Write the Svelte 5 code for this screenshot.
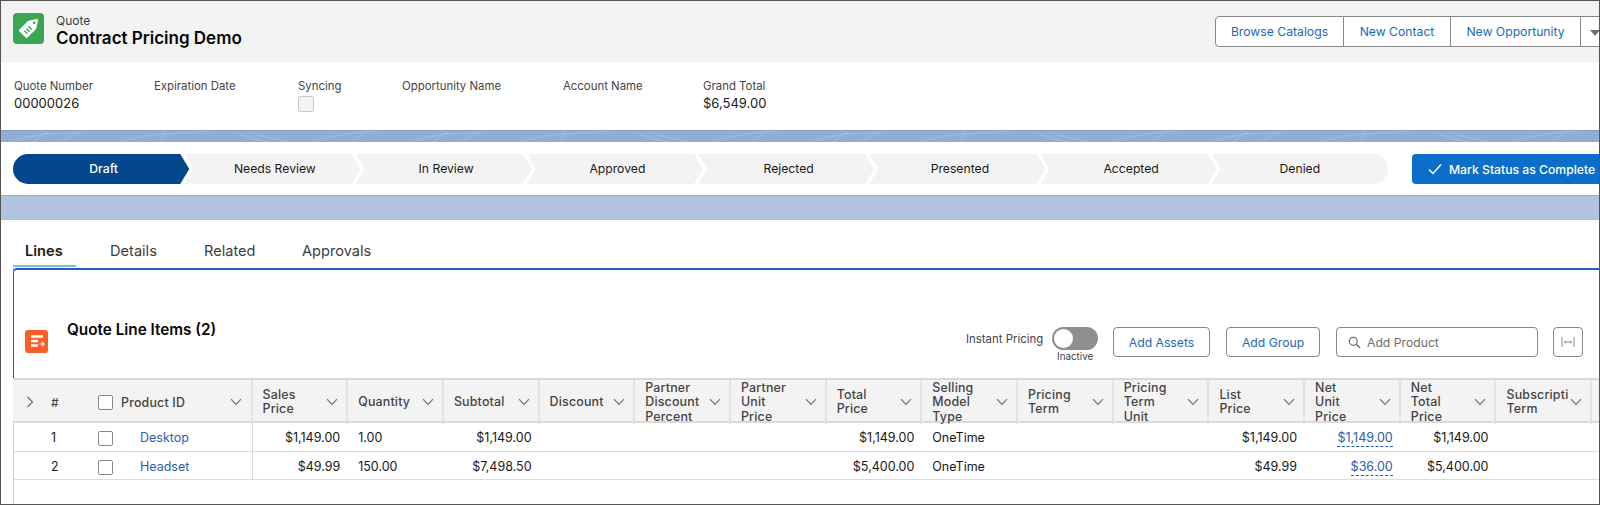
<script>
  const fields = [
    { label: 'Quote Number', value: '00000026', width: 140 },
    { label: 'Expiration Date', width: 144 },
    { label: 'Syncing', check: true, width: 104 },
    { label: 'Opportunity Name', width: 161 },
    { label: 'Account Name', width: 140 },
    { label: 'Grand Total', value: '$6,549.00', width: 100 }
  ];
  const stages = ['Draft', 'Needs Review', 'In Review', 'Approved', 'Rejected', 'Presented', 'Accepted', 'Denied'];
  const tabs = ['Lines', 'Details', 'Related', 'Approvals'];
  const columns = [
    ['Sales', 'Price'],
    ['Quantity'],
    ['Subtotal'],
    ['Discount'],
    ['Partner', 'Discount', 'Percent'],
    ['Partner', 'Unit', 'Price'],
    ['Total', 'Price'],
    ['Selling', 'Model', 'Type'],
    ['Pricing', 'Term'],
    ['Pricing', 'Term', 'Unit'],
    ['List', 'Price'],
    ['Net', 'Unit', 'Price'],
    ['Net', 'Total', 'Price'],
    ['Subscripti', 'Term']
  ];
  const rows = [
    { n: 1, name: 'Desktop', cells: ['$1,149.00', '1.00', '$1,149.00', '', '', '', '$1,149.00', 'OneTime', '', '', '$1,149.00', '$1,149.00', '$1,149.00', ''] },
    { n: 2, name: 'Headset', cells: ['$49.99', '150.00', '$7,498.50', '', '', '', '$5,400.00', 'OneTime', '', '', '$49.99', '$36.00', '$5,400.00', ''] }
  ];
  const leftAligned = [1, 7];
</script>

{#snippet caret()}
  <svg class="caret" viewBox="0 0 12 8" width="12" height="8"><path d="M1 1.2 6 6.4l5-5.2" fill="none" stroke="#706e6b" stroke-width="1.1" /></svg>
{/snippet}

<div class="frame">
  <header class="highlights">
    <div class="title-wrap">
      <div class="record-icon">
        <svg viewBox="1 1 29 29" width="31" height="31">
          <path d="M15.8 8.2 23 6.6c.9-.2 1.6.5 1.4 1.4l-1.6 7.2c-.1.4-.2.7-.5 1L14.6 24c-.5.5-1.3.5-1.8 0L7 18.2c-.5-.5-.5-1.3 0-1.8l7.800-7.700c.3-.3.6-.4 1-.5Z" fill="#fff" />
          <circle cx="20.800" cy="10.200" r="1.300" fill="#3ba755" />
          <path d="m11.500 17.500 3 3M13.500 15.500l3 3M15.500 13.500l3 3" stroke="#3ba755" stroke-width="1.300" />
        </svg>
      </div>
      <div>
        <div class="object-name">Quote</div>
        <h1>Contract Pricing Demo</h1>
      </div>
    </div>
    <div class="actions">
      <button>Browse Catalogs</button>
      <button>New Contact</button>
      <button>New Opportunity</button>
      <button class="more"><span class="tri"></span></button>
    </div>
  </header>

  <section class="fields">
    {#each fields as f}
      <div class="field" style="width: {f.width}px">
        <div class="field-label">{f.label}</div>
        {#if f.value}<div class="field-value">{f.value}</div>{/if}
        {#if f.check}<div class="field-check"></div>{/if}
      </div>
    {/each}
  </section>

  <div class="banner">
    <svg width="1600" height="11" viewBox="0 0 1600 11" preserveAspectRatio="none">
      {#each [0, 400, 800, 1200] as x}
        <g transform="translate({x} 0)" fill="none" stroke="#fff" stroke-opacity=".18" stroke-width="1">
          <path d="M10 11c20-8 50-10 70-9M32 11 48 0M58 11c10-4 16-9 20-11M120 11c30-9 60-9 90-11" />
          <path d="M160 11c2-4 3-8 2-11M232 0c10 5 22 9 36 11M246 0c14 6 30 9 42 11M310 11c20-6 40-10 70-11M352 11c5-3 9-7 12-11" />
        </g>
      {/each}
    </svg>
  </div>

  <section class="path-row">
    <div class="path">
      {#each stages as stage, i}
        <div class="stage" class:current={i === 0} class:first={i === 0} class:last={i === stages.length - 1}>{stage}</div>
      {/each}
    </div>
    <button class="complete">
      <svg viewBox="0 0 14 12" width="14" height="12"><path d="M1 6.500 5 10.500 13 1.500" fill="none" stroke="#fff" stroke-width="1.500" /></svg>
      Mark Status as Complete
    </button>
  </section>

  <div class="band"></div>

  <div class="content">
    <nav class="tabs">
      {#each tabs as tab, i}
        <div class="tab" class:active={i === 0}>{tab}</div>
      {/each}
    </nav>

    <section class="card">
      <div class="card-head">
        <div class="list-icon">
          <svg viewBox="0 0 22 22" width="22" height="22">
            <path d="M5 5.500h12M5 10h7M5 14.500h7" stroke="#fff" stroke-width="2.600" />
            <path d="M13.500 13h4M16 10.800l2 2.200-2 2.200" stroke="#fff" stroke-width="1.200" fill="none" />
          </svg>
        </div>
        <h2>Quote Line Items (2)</h2>
        <div class="tools">
          <div class="instant">
            <span class="instant-label">Instant Pricing</span>
            <div class="toggle-wrap">
              <div class="toggle"><span class="knob"></span></div>
              <span class="inactive">Inactive</span>
            </div>
          </div>
          <button class="tool assets">Add Assets</button>
          <button class="tool group">Add Group</button>
          <div class="search">
            <svg viewBox="0 0 14 14" width="13" height="13"><circle cx="5.700" cy="5.700" r="4.300" fill="none" stroke="#706e6b" stroke-width="1.300" /><path d="m9 9 4 4" stroke="#706e6b" stroke-width="1.500" /></svg>
            <span>Add Product</span>
          </div>
          <button class="tool fit" aria-label="Fit columns">
            <svg viewBox="0 0 14 12" width="14" height="12"><path d="M1 1v10M13 1v10M3.500 6h7M3.500 6l1.500-1.300M3.500 6l1.500 1.300M10.500 6 9 4.700M10.500 6 9 7.300" fill="none" stroke="#8a8886" stroke-width="1" /></svg>
          </button>
        </div>
      </div>

      <div class="table">
        <div class="row head">
          <div class="cell lead">
            <svg class="expand" viewBox="0 0 8 12" width="8" height="12"><path d="M1.500 1 6.500 6l-5 5" fill="none" stroke="#706e6b" stroke-width="1.200" /></svg>
            <span class="num">#</span>
            <span class="box"></span>
            <span class="product-label">Product ID</span>
            {@render caret()}
          </div>
          {#each columns as col}
            <div class="cell">
              <div class="col-name">{#each col as line}<div>{line}</div>{/each}</div>
              {@render caret()}
            </div>
          {/each}
          <div class="cell"></div>
        </div>

        {#each rows as row}
          <div class="row body">
            <div class="cell lead">
              <span class="row-num">{row.n}</span>
              <span class="box"></span>
              <span class="product-link">{row.name}</span>
            </div>
            {#each row.cells as value, i}
              <div class="cell" class:num-cell={!leftAligned.includes(i)}>
                {#if i === 11}
                  <span class="editable">{value}</span>
                {:else}
                  {value}
                {/if}
              </div>
            {/each}
            <div class="cell"></div>
          </div>
        {/each}
      </div>
    </section>
  </div>
</div>

<style>
  :global(body) {
    margin: 0;
    background: #fff;
    font-family: Inter, "Liberation Sans", sans-serif;
    color: #181818;
  }

  .frame {
    box-sizing: border-box;
    width: 1600px;
    height: 505px;
    overflow: hidden;
    border: 1px solid #555;
  }

  button {
    font-family: inherit;
    background: #fff;
    color: #1b6ab8;
    font-size: 12.200px;
    cursor: pointer;
  }

  /* top highlights */
  .highlights {
    height: 61px;
    background: #f3f3f3;
    display: flex;
    justify-content: space-between;
    align-items: flex-start;
  }

  .title-wrap {
    display: flex;
    gap: 12px;
    padding: 12px 0 0 12px;
  }

  .record-icon {
    width: 31px;
    height: 31px;
    background: #3ba755;
    border-radius: 4px;
  }

  .object-name {
    font-size: 12px;
    line-height: 15px;
    color: #3e3e3c;
  }

  h1 {
    margin: 0;
    font-size: 17px;
    line-height: 20px;
    font-weight: 600;
    color: #080707;
  }

  .actions {
    display: flex;
    margin-top: 15px;
    flex-shrink: 0;
    margin-right: -14px;
  }

  .actions button {
    height: 31px;
    padding: 0;
    border: 1px solid #8a8886;
    border-left: 0;
    width: 107px;
  }

  .actions button:nth-child(1) {
    width: 129px;
    border-left: 1px solid #8a8886;
    border-radius: 4px 0 0 4px;
  }

  .actions button:nth-child(3) {
    width: 130px;
  }

  .actions .more {
    width: 32px;
    text-align: left;
    padding-left: 9px;
  }

  .tri {
    display: inline-block;
    border-left: 5px solid transparent;
    border-right: 5px solid transparent;
    border-top: 6px solid #706e6b;
  }

  /* field strip */
  .fields {
    height: 68px;
    box-sizing: border-box;
    display: flex;
    padding: 16px 0 0 13px;
  }

  .field-label {
    font-size: 11.400px;
    line-height: 16px;
    color: #444;
  }

  .field-value {
    font-size: 13px;
    line-height: 19px;
    color: #181818;
  }

  .field-check {
    width: 14px;
    height: 14px;
    margin-top: 2px;
    background: #f3f3f3;
    border: 1px solid #c9c9c9;
    border-radius: 2px;
  }

  .banner {
    height: 11px;
    background: #8fadd6;
    overflow: hidden;
    border-top: 1px solid #86a0c6;
  }

  .banner svg {
    display: block;
  }

  /* path */
  .path-row {
    height: 54px;
    box-sizing: border-box;
    display: flex;
    align-items: flex-start;
    padding: 12px 0 0 12px;
    background: #fff;
    border-bottom: 1px solid #a0aec8;
  }

  .path {
    display: flex;
    width: 1375px;
    flex-shrink: 0;
  }

  .stage {
    flex: 1 1 0;
    height: 30px;
    line-height: 30px;
    margin-left: -5px;
    text-indent: 5px;
    text-align: center;
    background: #f3f3f3;
    font-size: 12.200px;
    color: #181818;
    clip-path: polygon(0 0, calc(100% - 9px) 0, 100% 50%, calc(100% - 9px) 100%, 0 100%, 9px 50%);
  }

  .stage.first {
    margin-left: 0;
    border-radius: 15px 0 0 15px;
    clip-path: polygon(0 0, calc(100% - 9px) 0, 100% 50%, calc(100% - 9px) 100%, 0 100%);
  }

  .stage.last {
    text-indent: 0;
    border-radius: 0 15px 15px 0;
    clip-path: polygon(0 0, 100% 0, 100% 100%, 0 100%, 9px 50%);
  }

  .stage.current {
    background: #03478c;
    color: #fff;
    font-weight: 500;
  }

  .complete {
    margin-left: 24px;
    flex: 1;
    min-width: 0;
    height: 30px;
    border: 0;
    border-radius: 4px 0 0 4px;
    background: #0b6fc9;
    color: #fff;
    font-size: 12.200px;
    font-weight: 500;
    display: flex;
    align-items: center;
    gap: 7px;
    padding: 0 0 0 16px;
    white-space: nowrap;
  }

  .band {
    height: 24px;
    background: #b0c3df;
  }

  /* tabs */
  .tabs {
    display: flex;
    margin-left: 12px;
    height: 48px;
    box-sizing: border-box;
    padding-top: 20px;
  }

  .tab {
    font-size: 14.600px;
    line-height: 22px;
    color: #3e3e3c;
    height: 27px;
    box-sizing: border-box;
    white-space: nowrap;
  }

  .tab:nth-child(1) {
    width: 63px;
    padding-left: 12px;
    margin-right: 34px;
  }

  .tab:nth-child(2) {
    width: 94px;
  }

  .tab:nth-child(3) {
    width: 98px;
  }

  .tab.active {
    font-weight: 600;
    color: #181818;
    border-bottom: 2px solid #8fb2e0;
  }

  /* card and table */
  .card {
    margin-left: 12px;
    height: 236px;
    box-sizing: border-box;
    border-left: 1px solid #c3cfe4;
  }

  .card-head {
    position: relative;
    height: 110px;
    box-sizing: border-box;
    margin-left: -1px;
    border-top: 2px solid #1b5fc0;
    border-left: 1px solid #1b5fc0;
    border-top-left-radius: 4px;
  }

  .list-icon {
    position: absolute;
    left: 11px;
    top: 60px;
    width: 23px;
    height: 23px;
    background: #fa5f2a;
    border-radius: 3px;
    display: flex;
    align-items: center;
    justify-content: center;
  }

  h2 {
    position: absolute;
    left: 53px;
    top: 51px;
    margin: 0;
    font-size: 15.300px;
    line-height: 18px;
    font-weight: 600;
    color: #080707;
  }

  .tools {
    position: absolute;
    top: 57px;
    left: 0;
    right: 0;
    display: flex;
    align-items: flex-start;
    padding-left: 952px;
  }

  .instant {
    display: flex;
    gap: 9px;
    width: 147px;
    flex-shrink: 0;
  }

  .instant-label {
    font-size: 11.400px;
    line-height: 14px;
    margin-top: 5px;
    color: #444;
    white-space: nowrap;
  }

  .toggle-wrap {
    display: flex;
    flex-direction: column;
    align-items: center;
    width: 46px;
  }

  .toggle {
    width: 46px;
    height: 23px;
    background: #8f8f8f;
    border-radius: 12px;
    box-sizing: border-box;
    padding: 2px;
  }

  .knob {
    display: block;
    width: 19px;
    height: 19px;
    background: #fff;
    border-radius: 50%;
  }

  .inactive {
    font-size: 9.800px;
    line-height: 12px;
    margin-top: 1px;
    color: #444;
  }

  .tool {
    height: 30px;
    border: 1px solid #8a8886;
    border-radius: 4px;
    padding: 0;
    flex-shrink: 0;
  }

  .assets {
    width: 97px;
  }

  .group {
    width: 94px;
    margin-left: 16px;
  }

  .search {
    width: 202px;
    height: 30px;
    box-sizing: border-box;
    margin-left: 16px;
    border: 1px solid #8a8886;
    border-radius: 4px;
    display: flex;
    align-items: center;
    gap: 6px;
    padding-left: 11px;
    font-size: 12.200px;
    color: #706e6b;
    flex-shrink: 0;
  }

  .fit {
    width: 30px;
    margin-left: 15px;
    display: flex;
    align-items: center;
    justify-content: center;
  }

  .table {
    border-top: 2px solid #d8d8d8;
    margin-left: -1px;
    overflow: hidden;
  }

  .row {
    display: grid;
    grid-template-columns: 239.500px repeat(14, 95.700px) 100px;
    border-bottom: 1px solid #dddbda;
  }

  .row.head {
    height: 41px;
    background: #f3f3f3;
    border-bottom: 2px solid #dddbda;
  }

  .row.body {
    height: 28px;
    font-size: 12.500px;
    line-height: 30px;
    color: #181818;
  }

  .row.body:last-child {
    height: 27px;
  }

  .head .cell {
    border-right: 2px solid #e3e3e3;
    display: flex;
    align-items: center;
    justify-content: space-between;
    padding: 1px 8px 0 10px;
    box-sizing: border-box;
  }

  .col-name {
    font-size: 12.400px;
    line-height: 14.300px;
    font-weight: 500;
    letter-spacing: 0.200px;
    color: #444;
    white-space: nowrap;
    overflow: hidden;
    max-width: 68px;
  }

  .caret {
    flex-shrink: 0;
  }

  .head .cell.lead {
    justify-content: flex-start;
    padding: 1px 0 0;
  }

  .expand {
    margin-left: 13px;
  }

  .num {
    font-size: 12px;
    font-weight: 500;
    color: #444;
    margin-left: 17px;
    width: 47px;
  }

  .lead .box {
    width: 15px;
    height: 15px;
    box-sizing: border-box;
    border: 1px solid #8a8886;
    border-radius: 2px;
    background: #fff;
    flex-shrink: 0;
  }

  .product-label {
    font-size: 12.400px;
    font-weight: 500;
    letter-spacing: 0.200px;
    color: #444;
    margin-left: 8px;
    width: 109px;
  }

  .body .cell {
    box-sizing: border-box;
    padding: 0 8px 0 10px;
    white-space: nowrap;
  }

  .body .num-cell {
    text-align: right;
  }

  .body .cell.lead {
    display: flex;
    align-items: center;
    padding: 0;
    border-right: 1px solid #dddbda;
  }

  .row-num {
    width: 47px;
    margin-left: 38px;
    font-size: 12.500px;
  }

  .product-link {
    margin-left: 27px;
    color: #2a5eb0;
  }

  .editable {
    color: #2a5eb0;
    border-bottom: 1px dashed #2a5eb0;
    padding-bottom: 1px;
  }
</style>
